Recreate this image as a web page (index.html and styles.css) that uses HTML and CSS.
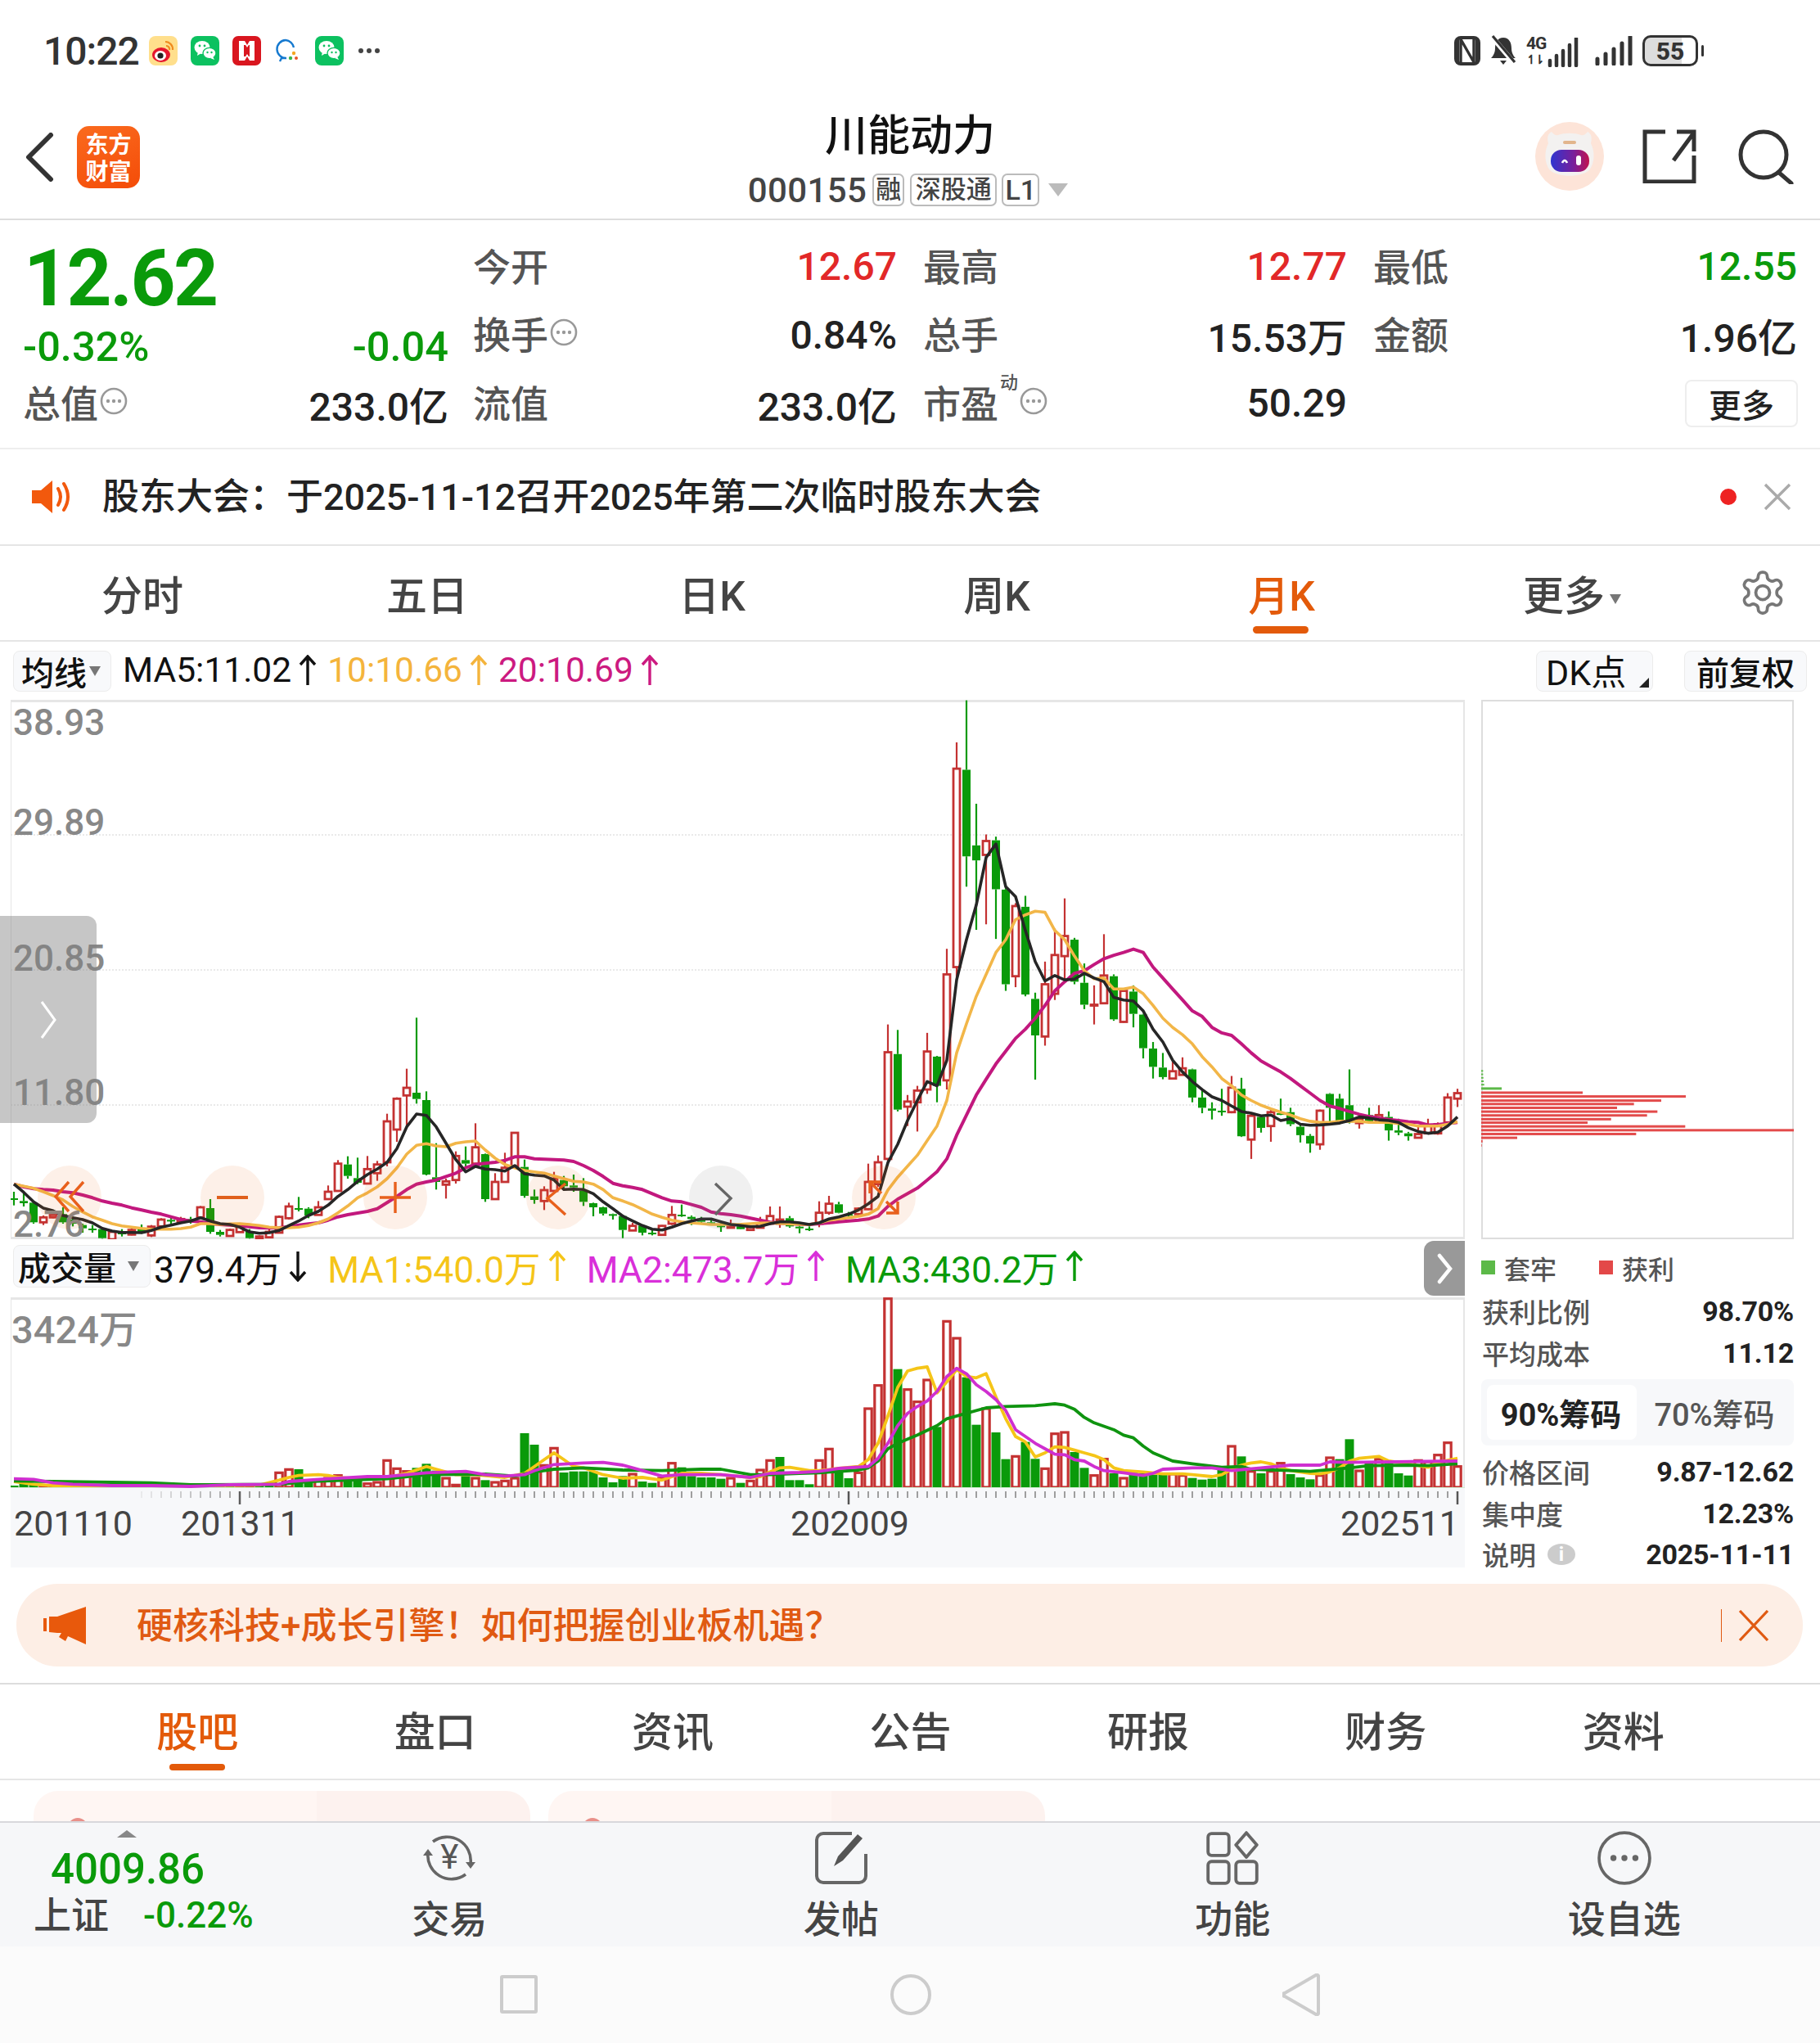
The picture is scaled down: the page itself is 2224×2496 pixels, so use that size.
FILE: index.html
```html
<!DOCTYPE html>
<html lang="zh-CN">
<head>
<meta charset="utf-8">
<title>川能动力 000155</title>
<link rel="stylesheet" href="styles.css">
</head>
<body>
<svg class="defs" width="0" height="0">
  <symbol id="arrow-up" viewBox="0 0 24 38"><path d="M12 37V2M3 12L12 2l9 10" fill="none" stroke="currentColor" stroke-width="3.4"/></symbol>
  <symbol id="arrow-down" viewBox="0 0 24 38"><path d="M12 1v35M3 26l9 10 9-10" fill="none" stroke="currentColor" stroke-width="3.4"/></symbol>
  <symbol id="dots" viewBox="0 0 34 34"><circle cx="17" cy="17" r="15" fill="none" stroke="#999" stroke-width="2.6"/><circle cx="10" cy="17" r="2.2" fill="#999"/><circle cx="17" cy="17" r="2.2" fill="#999"/><circle cx="24" cy="17" r="2.2" fill="#999"/></symbol>
  <symbol id="wechat" viewBox="0 0 35 36"><rect width="35" height="36" rx="8" fill="#0cc160"/><ellipse cx="14" cy="14" rx="9.5" ry="8" fill="#fff"/><path d="M9 19l-1 5 5-3z" fill="#fff"/><ellipse cx="23" cy="21" rx="8" ry="6.6" fill="#fff" stroke="#0cc160" stroke-width="1.4"/><path d="M27 25l2 4-5-2z" fill="#fff"/><circle cx="11" cy="12" r="1.4" fill="#0cc160"/><circle cx="17" cy="12" r="1.4" fill="#0cc160"/><circle cx="20.5" cy="20" r="1.2" fill="#0cc160"/><circle cx="25.500" cy="20" r="1.2" fill="#0cc160"/></symbol>
</svg>

<header class="status">
  <div class="status-left">
    <span class="clock">10:22</span>
    <svg class="app" viewBox="0 0 35 36"><rect width="35" height="36" rx="8" fill="#ffdf8c"/><ellipse cx="15" cy="23" rx="11" ry="9" fill="#e6162d"/><ellipse cx="14" cy="24" rx="7" ry="6" fill="#fff"/><circle cx="14" cy="24" r="3.6" fill="#222"/><path d="M20 7a9 9 0 0 1 9 10M21 12a4 4 0 0 1 4 5" fill="none" stroke="#f08a1d" stroke-width="2.2"/></svg>
    <svg class="app"><use href="#wechat"/></svg>
    <svg class="app" viewBox="0 0 35 36"><rect width="35" height="36" rx="7" fill="#d9161f"/><path d="M8 6h7l3 5 3-5h6v24h-6l-3-5-3 5H8z" fill="#fff"/><path d="M14 11h2l2 3 2-3h1v14h-1l-2-3-2 3h-2z" fill="#d9161f"/></svg>
    <svg class="app app-thin" viewBox="0 0 30 36"><path d="M14 5a11 11 0 1 0 1 22h-6l-2 4" fill="none" stroke="#1579cf" stroke-width="2.4"/><path d="M14 5a11 11 0 0 1 10 9" fill="none" stroke="#1579cf" stroke-width="2.4"/><circle cx="24" cy="21" r="2.2" fill="#f5a623"/><circle cx="20" cy="27" r="2.2" fill="#39b54a"/><circle cx="27" cy="27" r="2" fill="#e8562a"/></svg>
    <svg class="app"><use href="#wechat"/></svg>
    <span class="more-dots"><i></i><i></i><i></i></span>
  </div>
  <div class="status-right">
    <svg class="st-nfc" viewBox="0 0 32 38"><rect x="0" y="1" width="32" height="36" rx="8" fill="#333"/><rect x="6" y="5" width="20" height="28" rx="2" fill="#fff"/><path d="M8 4v30M24 4v30M8 5l16 28" fill="none" stroke="#333" stroke-width="3.400"/></svg>
    <svg class="st-bell" viewBox="0 0 32 38"><path d="M16 3c-7 0-10 6-10 13 0 6-3 10-5 12h30c-2-2-5-6-5-12 0-7-3-13-10-13z" fill="#333"/><path d="M12 31h8l-4 5z" fill="#333"/><path d="M3 3l27 32" stroke="#fff" stroke-width="6"/><path d="M3 1l27 32" stroke="#333" stroke-width="3.2"/></svg>
    <span class="st-net">
      <span class="st-4g">4G<em>↿⇂</em></span>
      <svg class="st-bars" viewBox="0 0 38 36"><path d="M3 28v6M11 22v12M19 16v18M27 9v25M35 1v33" stroke="#333" stroke-width="4.5" stroke-linecap="round"/></svg>
    </span>
    <svg class="st-bars st-bars-2" viewBox="0 0 46 36"><path d="M3 28v6M13 22v12M23 16v18M33 9v25M43 1v33" stroke="#333" stroke-width="5" stroke-linecap="round"/></svg>
    <span class="battery"><b>55</b></span>
  </div>
</header>

<section class="topbar">
  <div class="topbar-left">
    <svg class="back" viewBox="0 0 36 60"><path d="M32 3L5 30l27 27" fill="none" stroke="#333" stroke-width="6" stroke-linecap="round" stroke-linejoin="round"/></svg>
    <div class="logo">东方<br>财富</div>
  </div>
  <div class="topbar-center">
    <h1>川能动力</h1>
    <div class="code-row">
      <span class="code">000155</span>
      <span class="tag">融</span><span class="tag tag-wide">深股通</span><span class="tag tag-l1">L1</span>
      <span class="tri-down"></span>
    </div>
  </div>
  <div class="topbar-right">
    <svg class="robot" viewBox="0 0 84 84"><defs><linearGradient id="visor" x1="0" x2="1"><stop offset="0" stop-color="#2f35d0"/><stop offset=".6" stop-color="#7a1f9a"/><stop offset="1" stop-color="#c0134e"/></linearGradient></defs><circle cx="42" cy="42" r="42" fill="#fde4d8"/><path d="M16 26c-2-8 0-12 4-14 3 4 6 5 8 4 8-3 20-3 28 0 2 1 5 0 8-4 4 2 6 6 4 14 5 10 5 24-2 33-10 9-38 9-48 0-7-9-7-23-2-33z" fill="#f3f1f0"/><rect x="19" y="34" width="47" height="27" rx="13" fill="url(#visor)"/><path d="M33 50q3-6 6 0" fill="none" stroke="#fff" stroke-width="2.6"/><rect x="50" y="41" width="6" height="12" rx="3" fill="#fff"/><rect x="34" y="23" width="16" height="4" rx="2" fill="#e2b58c"/></svg>
    <svg class="share" viewBox="0 0 66 66"><path d="M28 3H3v61h60V32M38 38L63 4M42 3h21v24" fill="none" stroke="#333" stroke-width="5"/></svg>
    <svg class="search" viewBox="0 0 68 68"><circle cx="31" cy="32" r="28" fill="none" stroke="#333" stroke-width="5"/><path d="M50 54l15 13" stroke="#333" stroke-width="5" stroke-linecap="round"/></svg>
  </div>
</section>

<section class="quote">
  <div class="q-main">
    <div class="q-price">12.62</div>
    <div class="q-change"><span>-0.32%</span><span>-0.04</span></div>
  </div>
  <div class="q-cell"><span class="lb">今开</span><span class="val up">12.67</span></div>
  <div class="q-cell"><span class="lb">最高</span><span class="val up">12.77</span></div>
  <div class="q-cell"><span class="lb">最低</span><span class="val down">12.55</span></div>
  <div class="q-cell"><span class="lb">换手<svg class="q-dots"><use href="#dots"/></svg></span><span class="val">0.84%</span></div>
  <div class="q-cell"><span class="lb">总手</span><span class="val">15.53万</span></div>
  <div class="q-cell"><span class="lb">金额</span><span class="val">1.96亿</span></div>
  <div class="q-cell q-first"><span class="lb">总值<svg class="q-dots"><use href="#dots"/></svg></span><span class="val">233.0亿</span></div>
  <div class="q-cell"><span class="lb">流值</span><span class="val">233.0亿</span></div>
  <div class="q-cell"><span class="lb">市盈<sup>动</sup><svg class="q-dots"><use href="#dots"/></svg></span><span class="val">50.29</span></div>
  <div class="q-cell q-more"><button class="btn-more">更多</button></div>
</section>

<section class="notice">
  <svg class="notice-icon" viewBox="0 0 50 44"><path d="M1 14h11L26 2v40L12 30H1z" fill="#f2590d"/><path d="M33 12q6 10 0 20M40 6q10 16 0 32" fill="none" stroke="#f2590d" stroke-width="4" stroke-linecap="round"/></svg>
  <span class="notice-text">股东大会：于2025-11-12召开2025年第二次临时股东大会</span>
  <i class="notice-dot"></i>
  <svg class="notice-x" viewBox="0 0 36 36"><path d="M3 3l30 30M33 3L3 33" stroke="#aaa" stroke-width="3.400"/></svg>
</section>

<nav class="period">
  <span class="p-tab">分时</span>
  <span class="p-tab">五日</span>
  <span class="p-tab">日K</span>
  <span class="p-tab">周K</span>
  <span class="p-tab is-on">月K</span>
  <span class="p-tab p-more">更多<i class="tri-small"></i></span>
  <span class="p-gear">
    <svg viewBox="0 0 24 24"><path d="M12.22 2h-.44a2 2 0 0 0-2 2v.18a2 2 0 0 1-1 1.73l-.43.25a2 2 0 0 1-2 0l-.15-.08a2 2 0 0 0-2.73.73l-.22.38a2 2 0 0 0 .73 2.73l.15.1a2 2 0 0 1 1 1.72v.51a2 2 0 0 1-1 1.74l-.15.09a2 2 0 0 0-.73 2.73l.22.38a2 2 0 0 0 2.73.73l.15-.08a2 2 0 0 1 2 0l.43.25a2 2 0 0 1 1 1.73V20a2 2 0 0 0 2 2h.44a2 2 0 0 0 2-2v-.18a2 2 0 0 1 1-1.73l.43-.25a2 2 0 0 1 2 0l.15.08a2 2 0 0 0 2.73-.73l.22-.39a2 2 0 0 0-.73-2.73l-.15-.08a2 2 0 0 1-1-1.74v-.5a2 2 0 0 1 1-1.74l.15-.09a2 2 0 0 0 .73-2.73l-.22-.38a2 2 0 0 0-2.73-.73l-.15.08a2 2 0 0 1-2 0l-.43-.25a2 2 0 0 1-1-1.73V4a2 2 0 0 0-2-2z" fill="none" stroke="#777" stroke-width="1.5"/><circle cx="12" cy="12" r="3.4" fill="none" stroke="#777" stroke-width="1.5"/></svg>
  </span>
</nav>

<section class="ma-row">
  <span class="pill pill-ma">均线<i class="tri-small"></i></span>
  <span class="ma ma-black">MA5:11.02<svg class="arr"><use href="#arrow-up"/></svg></span>
  <span class="ma ma-orange">10:10.66<svg class="arr"><use href="#arrow-up"/></svg></span>
  <span class="ma ma-pink">20:10.69<svg class="arr"><use href="#arrow-up"/></svg></span>
  <span class="ma-spacer"></span>
  <span class="pill pill-dk">DK点<i class="corner"></i></span>
  <span class="pill pill-fq">前复权</span>
</section>

<main class="board">
  <div class="board-left">
    <div class="kchart">
      <svg id="kline" class="chart-svg" viewBox="13 855 1777 659"></svg>
      <span class="ax ax-1">38.93</span>
      <span class="ax ax-2">29.89</span>
      <span class="ax ax-3">20.85</span>
      <span class="ax ax-4">11.80</span>
      <span class="ax ax-5">2.76</span>
      <div class="handle"><svg viewBox="0 0 20 46"><path d="M2 1l16 22L2 45" fill="none" stroke="#fff" stroke-width="3"/></svg></div>
      <div class="fabs">
        <span class="fab"><svg viewBox="0 0 78 78"><path d="M38 20L22 38l16 18M56 20L40 38l16 18" fill="none" stroke="#e8601c" stroke-width="3.400"/></svg></span>
        <span class="fab"><svg viewBox="0 0 78 78"><path d="M20 39h38" stroke="#e0601c" stroke-width="4"/></svg></span>
        <span class="fab"><svg viewBox="0 0 78 78"><path d="M20 39h38M39 20v38" stroke="#e8601c" stroke-width="3.400"/></svg></span>
        <span class="fab"><svg viewBox="0 0 78 78"><path d="M48 22L26 40l22 20" fill="none" stroke="#e8601c" stroke-width="3.400"/></svg></span>
        <span class="fab fab-grey"><svg viewBox="0 0 78 78"><path d="M32 22l19 18-19 20" fill="none" stroke="#666" stroke-width="3.400"/></svg></span>
        <span class="fab"><svg viewBox="0 0 78 78"><path d="M22 34V20h14M22 20l14 14M56 44v14H42M56 58L42 44" fill="none" stroke="#e8601c" stroke-width="3.400"/></svg></span>
      </div>
    </div>
    <div class="vol-head">
      <span class="pill pill-vol">成交量<i class="tri-small"></i></span>
      <span class="ma ma-black">379.4万<svg class="arr"><use href="#arrow-down"/></svg></span>
      <span class="ma ma-yellow">MA1:540.0万<svg class="arr"><use href="#arrow-up"/></svg></span>
      <span class="ma ma-magenta">MA2:473.7万<svg class="arr"><use href="#arrow-up"/></svg></span>
      <span class="ma ma-green">MA3:430.2万<svg class="arr"><use href="#arrow-up"/></svg></span>
      <span class="vol-next"><svg viewBox="0 0 20 38"><path d="M4 3l13 16L4 35" fill="none" stroke="#fff" stroke-width="4.500" stroke-linecap="round"/></svg></span>
    </div>
    <div class="volchart">
      <svg id="volume" class="chart-svg" viewBox="13 1585 1777 233"></svg>
      <span class="ax ax-vol">3424万</span>
    </div>
    <div class="timeline">
      <svg id="ticks" class="chart-svg" viewBox="13 1818 1777 97"></svg>
      <span class="tl tl-1">201110</span>
      <span class="tl tl-2">201311</span>
      <span class="tl tl-3">202009</span>
      <span class="tl tl-4">202511</span>
    </div>
  </div>

  <aside class="chips">
    <div class="chip-chart"><svg id="chipbars" class="chart-svg" viewBox="0 0 382 659"></svg></div>
    <div class="chip-legend">
      <span class="lg"><i class="sq sq-g"></i>套牢</span>
      <span class="lg"><i class="sq sq-r"></i>获利</span>
    </div>
    <div class="chip-row"><span>获利比例</span><b>98.70%</b></div>
    <div class="chip-row"><span>平均成本</span><b>11.12</b></div>
    <div class="chip-tabs"><span class="ct ct-on">90%筹码</span><span class="ct">70%筹码</span></div>
    <div class="chip-row"><span>价格区间</span><b>9.87-12.62</b></div>
    <div class="chip-row"><span>集中度</span><b>12.23%</b></div>
    <div class="chip-row"><span>说明<i class="info">i</i></span><b>2025-11-11</b></div>
  </aside>
</main>

<section class="promo">
  <svg class="promo-icon" viewBox="0 0 52 46"><path d="M0 14h4v16H0zM7 12h10L52 0v46L30 36l-3 6-8-5 3-5h-5l-10-1z" fill="#e8590c"/></svg>
  <span class="promo-text">硬核科技+成长引擎！如何把握创业板机遇？</span>
  <i class="promo-sep"></i>
  <svg class="promo-x" viewBox="0 0 38 38"><path d="M2 1l34 36M36 1L2 37" stroke="#e05a12" stroke-width="3.200"/></svg>
</section>

<nav class="tabs">
  <span class="tab is-on">股吧</span>
  <span class="tab">盘口</span>
  <span class="tab">资讯</span>
  <span class="tab">公告</span>
  <span class="tab">研报</span>
  <span class="tab">财务</span>
  <span class="tab">资料</span>
</nav>

<section class="peek">
  <div class="peek-card"><i></i></div>
  <div class="peek-card"><i></i></div>
</section>

<footer class="dock">
  <div class="index">
    <i class="index-tri"></i>
    <div class="index-val">4009.86</div>
    <div class="index-sub"><span>上证</span><b>-0.22%</b></div>
  </div>
  <div class="dock-item">
    <span class="trade-icon"><svg viewBox="0 0 72 66"><path d="M16 13A29 29 0 0 1 62 40M56 53A29 29 0 0 1 10 26" fill="none" stroke="#666" stroke-width="3.600"/><path d="M4 30l6-8 6 8M56 38l6 8 6-8" fill="#666"/></svg><em>¥</em></span>
    <span class="dock-label">交易</span>
  </div>
  <div class="dock-item">
    <svg class="dock-icon" viewBox="0 0 66 66"><path d="M46 3H11a8 8 0 0 0-8 8v44a8 8 0 0 0 8 8h44a8 8 0 0 0 8-8V28" fill="none" stroke="#666" stroke-width="4"/><path d="M24 43l5-12L53 4l6 5-24 27z" fill="#555"/></svg>
    <span class="dock-label">发帖</span>
  </div>
  <div class="dock-item">
    <svg class="dock-icon" viewBox="0 0 60 62"><rect x="2" y="3" width="24" height="25" rx="4" fill="none" stroke="#666" stroke-width="3.600"/><rect x="2" y="35" width="24" height="25" rx="4" fill="none" stroke="#666" stroke-width="3.600"/><rect x="34" y="35" width="24" height="25" rx="4" fill="none" stroke="#666" stroke-width="3.600"/><path d="M46 2l12 14-12 14-12-14z" fill="none" stroke="#666" stroke-width="3.600" stroke-linejoin="round"/></svg>
    <span class="dock-label">功能</span>
  </div>
  <div class="dock-item">
    <svg class="dock-icon" viewBox="0 0 64 64"><circle cx="32" cy="32" r="30" fill="none" stroke="#666" stroke-width="3.600"/><circle cx="19" cy="32" r="3.600" fill="#666"/><circle cx="32" cy="32" r="3.600" fill="#666"/><circle cx="45" cy="32" r="3.600" fill="#666"/></svg>
    <span class="dock-label">设自选</span>
  </div>
</footer>

<div class="navbar">
  <i class="nav-square"></i>
  <i class="nav-circle"></i>
  <svg class="nav-back" viewBox="0 0 46 52"><path d="M44 3v46a2 2 0 0 1-3 1L3 28a2 2 0 0 1 0-4L41 2a2 2 0 0 1 3 1z" fill="none" stroke="#ccc" stroke-width="4"/></svg>
</div>

<script src="chart.js"></script>
</body>
</html>
```
FILE: styles.css
```css
* { box-sizing: border-box; }
html, body { margin: 0; padding: 0; }
body {
  width: 2224px;
  height: 2496px;
  overflow: hidden;
  background: #fff;
  color: #222;
  font-family: Roboto, "Noto Sans CJK SC", sans-serif;
}
i, em { font-style: normal; }
.defs { position: absolute; }

/* status bar */
.status { height: 120px; display: flex; justify-content: space-between; align-items: center; padding: 4px 0 0 53px; }
.status-left { display: flex; align-items: center; }
.clock { font-size: 48px; font-weight: 500; color: #333; width: 129px; letter-spacing: -1px; }
.app { width: 35px; height: 36px; margin-right: 16px; }
.app-thin { width: 30px; margin-right: 20px; }
.more-dots { display: flex; gap: 4px; margin-left: 2px; }
.more-dots i { width: 6px; height: 6px; border-radius: 50%; background: #444; }
.status-right { display: flex; align-items: center; width: 447px; height: 40px; }
.st-nfc { width: 32px; height: 38px; margin-right: 12px; }
.st-bell { width: 32px; height: 38px; margin-right: 12px; }
.st-net { display: flex; align-items: flex-end; width: 64px; height: 40px; margin-right: 20px; }
.st-4g { display: flex; flex-direction: column; width: 26px; font-size: 21px; line-height: 22px; font-weight: 700; color: #333; letter-spacing: -1px; }
.st-4g em { font-size: 15px; line-height: 18px; letter-spacing: -3px; }
.st-bars { width: 38px; height: 36px; }
.st-bars-2 { width: 46px; margin-right: 12px; }
.battery { position: relative; display: flex; align-items: center; justify-content: center; width: 68px; height: 38px; border: 3px solid #333; border-radius: 10px; background: linear-gradient(90deg, #ddd 72%, #fff 72%); }
.battery b { font-size: 30px; font-weight: 800; color: #333; }
.battery::after { content: ""; position: absolute; right: -10px; top: 9px; width: 3px; height: 14px; background: #333; border-radius: 2px; }

/* top bar */
.topbar { position: relative; height: 149px; border-bottom: 2px solid #ddd; display: flex; justify-content: space-between; }
.topbar-left { display: flex; align-items: center; gap: 28px; padding: 0 0 4px 30px; }
.back { width: 36px; height: 60px; }
.logo { width: 77px; height: 76px; border-radius: 15px; background: linear-gradient(160deg, #fa6a1e, #f44c08); color: #fff; font-size: 28px; line-height: 33px; font-weight: 700; text-align: center; padding-top: 5px; font-family: "Noto Sans CJK SC", sans-serif; }
.topbar-center { position: absolute; left: 0; right: 0; top: 12px; display: flex; flex-direction: column; align-items: center; }
.topbar-center h1 { margin: 0; font-size: 52px; line-height: 70px; font-weight: 500; color: #111; }
.code-row { display: flex; align-items: center; height: 40px; margin-top: 10px; gap: 7px; margin-left: -5px; }
.code { font-size: 42px; color: #444; letter-spacing: .4px; font-weight: 500; }
.tag { height: 40px; width: 39px; border: 2px solid #bbb; border-radius: 7px; font-size: 31px; line-height: 36px; text-align: center; color: #444; font-weight: 500; }
.tag-wide { width: 106px; margin-left: 0; }
.tag-l1 { width: 46px; margin-left: -1px; font-size: 34px; }
.tri-down { width: 0; height: 0; border-left: 12px solid transparent; border-right: 12px solid transparent; border-top: 16px solid #bbb; margin-left: 4px; }
.topbar-right { display: flex; align-items: center; padding: 0 32px 6px 0; }
.robot { width: 84px; height: 84px; margin-right: 47px; }
.share { width: 66px; height: 66px; margin-right: 51px; }
.search { width: 68px; height: 68px; }

/* quote */
.quote { height: 280px; padding: 15px 28px 0 28px; display: grid; grid-template-columns: repeat(4, 1fr); grid-template-rows: repeat(3, 83.5px); column-gap: 32px; border-bottom: 2px solid #eee; }
.q-main { grid-row: 1 / span 2; display: flex; flex-direction: column; margin-right: -2px; }
.q-price { font-size: 96px; line-height: 112px; font-weight: 700; color: #0a9a0a; letter-spacing: -2.5px; padding-left: 1px; }
.q-change { display: flex; justify-content: space-between; font-size: 50.500px; line-height: 50px; margin-top: 3px; font-weight: 500; color: #0a9a0a; }
.q-first { margin-right: -2px; }
.q-cell { display: flex; align-items: center; justify-content: space-between; }
.lb { display: flex; align-items: center; font-size: 46px; font-weight: 500; color: #555; padding-bottom: 6px; }
.lb sup { font-size: 22px; line-height: 22px; align-self: flex-start; margin: 0 0 0 2px; }
.val { font-size: 48px; font-weight: 500; color: #222; }
.up { color: #e22828; }
.down { color: #0a9a0a; }
.q-dots { width: 34px; height: 34px; margin-left: 2px; }
.btn-more { margin-left: auto; width: 138px; height: 58px; margin-right: -1px; border: 2px solid #eee; border-radius: 8px; background: #fff; color: #222; font: 500 40px/1 "Noto Sans CJK SC", sans-serif; padding: 0; }

/* notice */
.notice { height: 118px; display: flex; align-items: center; padding: 0 34px 0 38px; border-bottom: 2px solid #e5e5e5; }
.notice-icon { width: 50px; height: 44px; margin-right: 37px; }
.notice-text { flex: 1; font-size: 45px; font-weight: 500; color: #222; padding-bottom: 7px; }
.notice-dot { width: 20px; height: 20px; border-radius: 50%; background: #ee2222; margin-right: 32px; }
.notice-x { width: 36px; height: 36px; }

/* period tabs */
.period { height: 117px; display: grid; grid-template-columns: repeat(6, 348px) 1fr; align-items: center; border-bottom: 2px solid #e5e5e5; padding-bottom: 2px; }
.p-tab { position: relative; text-align: center; font-size: 50px; font-weight: 500; color: #444; }
.p-tab.is-on { color: #e35a0a; }
.p-tab.is-on::after { content: ""; position: absolute; left: 139px; top: 77px; width: 68px; height: 9px; border-radius: 5px; background: #e35a0a; }
.p-more { padding-left: 14px; }
.tri-small { display: inline-block; width: 0; height: 0; border-left: 7px solid transparent; border-right: 7px solid transparent; border-top: 12px solid #777; margin-left: 6px; vertical-align: 8px; }
.p-gear { width: 60px; height: 60px; margin-left: 36px; }
.p-gear svg { width: 60px; height: 60px; display: block; }

/* MA row */
.ma-row { height: 71px; display: flex; align-items: center; padding: 0 16px; gap: 12px; }
.pill { display: flex; align-items: center; height: 50px; border: 1.5px solid #ececec; border-radius: 8px; background: #f8f9fb; font-size: 40px; font-weight: 500; color: #111; font-family: "Noto Sans CJK SC", Roboto, sans-serif; }
.pill-ma { width: 120px; margin-right: 2px; padding-left: 9px; }
.pill-ma .tri-small { margin-left: 3px; }
.pill-dk { position: relative; width: 143px; margin-right: 26px; font-family: Roboto, "Noto Sans CJK SC", sans-serif; padding-left: 11px; font-size: 43px; font-weight: 400; padding-bottom: 3px; }
.pill-fq { width: 150px; justify-content: center; }
.corner { position: absolute; right: 4px; bottom: 4px; width: 0; height: 0; border-left: 12px solid transparent; border-bottom: 12px solid #222; }
.ma-spacer { flex: 1; }
.ma { display: inline-flex; align-items: center; gap: 8px; font-size: 42.500px; white-space: nowrap; }
.ma-row .ma { padding-bottom: 2px; }
.arr { width: 24px; height: 38px; }
.ma-black { color: #111; }
.ma-orange { color: #f4b43c; }
.ma-pink { color: #cc1a80; }
.ma-yellow { color: #f5c518; }
.ma-magenta { color: #d92fd9; }
.ma-green { color: #0a9a0a; }

/* board */
.board { display: grid; grid-template-columns: 1777px 382px; column-gap: 20px; margin-left: 13px; height: 1060px; }
.board-left { display: flex; flex-direction: column; }
.kchart { position: relative; height: 659px; border: solid #e6e6e6; border-width: 3px 2px 3px 1px; }
.chart-svg { position: absolute; left: -1px; top: -3px; width: 1777px; height: 100%; display: block; }
.kchart .chart-svg { height: 659px; }
.ax { position: absolute; left: 2px; font-size: 44px; line-height: 44px; color: #888; font-weight: 500; }
.ax-1 { top: 3px; }
.ax-2 { top: 125px; }
.ax-3 { top: 291px; }
.ax-4 { top: 455px; }
.ax-5 { top: 616px; }
.handle { position: absolute; left: -14px; top: 261px; width: 118px; height: 253px; border-radius: 0 12px 12px 0; background: rgba(128, 128, 128, .45); display: flex; align-items: center; justify-content: center; }
.handle svg { width: 20px; height: 46px; }
.fabs { position: absolute; left: 32px; top: 566px; display: flex; gap: 121px; }
.fab { width: 78px; height: 78px; border-radius: 50%; background: rgba(240, 110, 30, .1); }
.fab svg { width: 78px; height: 78px; display: block; }
.fab-grey { background: rgba(130, 130, 130, .12); }

.vol-head { position: relative; height: 71px; display: flex; align-items: center; gap: 24px; padding: 0 0 5px 3px; }
.vol-head .ma { font-size: 44.500px; }
.pill-vol { width: 168px; margin-right: -20px; height: 52px; padding-left: 5px; }
.pill-vol .tri-small { margin-left: 14px; }
.vol-next { position: absolute; right: 0; top: 2px; width: 50px; height: 67px; border-radius: 12px 0 0 12px; background: #999; display: flex; align-items: center; justify-content: center; }
.vol-next svg { width: 20px; height: 38px; }
.volchart { position: relative; height: 233px; border-left: 1px solid #e6e6e6; border-right: 2px solid #e6e6e6; border-top: 3px solid #e6e6e6; }
#volume { top: -3px; left: -1px; height: 233px; }
.ax-vol { top: 15px; left: 0; font-size: 47px; }
.timeline { position: relative; height: 97px; background: #f7f8fa; }
#ticks { left: 0; top: 0; height: 97px; }
.tl { position: absolute; top: 19px; font-size: 43px; line-height: 48px; color: #444; }
.tl-1 { left: 4px; }
.tl-2 { left: 208px; }
.tl-3 { left: 953px; }
.tl-4 { left: 1625px; }

/* chips */
.chips { display: flex; flex-direction: column; height: 1060px; overflow: hidden; }
.chip-chart { position: relative; height: 659px; flex: none; border: 2px solid #ddd; }
#chipbars { left: -2px; top: -2px; width: 382px; height: 659px; }
.chip-legend { height: 63px; flex: none; display: flex; align-items: center; gap: 52px; font-size: 32px; font-weight: 500; color: #555; padding-top: 6px; }
.lg { display: flex; align-items: center; font-family: "Noto Sans CJK SC", sans-serif; }
.sq { width: 17px; height: 17px; margin-right: 11px; }
.sq-g { background: #5cb948; }
.sq-r { background: #e34848; }
.chip-row { flex: none; height: 50.500px; display: flex; align-items: center; justify-content: space-between; font-size: 33px; color: #555; padding: 0 0 0 1px; }
.chip-row b { font-weight: 700; color: #222; font-size: 34px; letter-spacing: -.2px; }
.chip-row span { display: flex; align-items: center; font-weight: 500; font-family: "Noto Sans CJK SC", sans-serif; }
.info { width: 34px; height: 26px; margin-left: 14px; border-radius: 50%; background: #ccc; color: #fff; font: 700 24px/26px Roboto, sans-serif; text-align: center; }
.chip-tabs { flex: none; height: 81px; margin: 7px 0; border-radius: 8px; background: #f7f8fa; display: flex; padding: 7px; align-items: stretch; }
.ct { flex: 1; display: flex; align-items: center; justify-content: center; font-size: 38px; color: #555; font-weight: 500; padding-left: 5px; }
.ct-on { background: #fff; border-radius: 8px; color: #222; font-weight: 700; flex: none; width: 183px; padding: 0 2px 0 0; }

/* promo */
.promo { height: 101px; margin: 20px 21px 20px 20px; border-radius: 50px; background: #fdeee5; display: flex; align-items: center; padding: 0 41px 0 33px; }
.promo-icon { width: 52px; height: 46px; margin-right: 62px; }
.promo-text { flex: 1; font-size: 44px; font-weight: 500; color: #e05a12; padding-bottom: 5px; }
.promo-sep { width: 1px; height: 40px; background: #e05a12; margin-right: 20px; }
.promo-x { width: 38px; height: 38px; }

/* tabs */
.tabs { height: 119px; padding: 0 95px 7px 96px; display: grid; grid-template-columns: repeat(7, 1fr); align-items: center; border-top: 2px solid #ddd; border-bottom: 2px solid #e6e6e6; }
.tab { position: relative; text-align: center; font-size: 50px; font-weight: 500; color: #444; }
.tab.is-on { color: #e35a0a; }
.tab.is-on::after { content: ""; position: absolute; left: 111px; top: 79px; width: 68px; height: 8px; border-radius: 4px; background: #e35a0a; }

.peek { height: 50px; overflow: hidden; display: flex; gap: 22px; padding: 13px 0 0 41px; }
.peek-card { position: relative; width: 607px; height: 90px; border-radius: 30px; background: linear-gradient(90deg, #fff6f3 57%, #fdf2ef 57%); }
.peek-card i { position: absolute; left: 42px; top: 33px; width: 24px; height: 24px; border-radius: 50%; background: #e9908a; }

/* dock */
.dock { height: 153px; background: #f6f7f9; border-top: 2px solid #d8d8dc; display: grid; grid-template-columns: 310px repeat(4, 478.5px); }
.index { position: relative; padding: 30px 0 0 41px; }
.index-tri { position: absolute; left: 143px; top: 9px; width: 0; height: 0; border-left: 12px solid transparent; border-right: 12px solid transparent; border-bottom: 9px solid #888; }
.index-val { font-size: 51px; line-height: 54px; font-weight: 500; color: #0a9a0a; padding-left: 21px; }
.index-sub { display: flex; align-items: center; gap: 42px; margin-top: 1px; font-size: 46px; font-weight: 500; color: #444; line-height: 56px; }
.index-sub b { font-size: 44px; font-weight: 500; color: #0a9a0a; }
.dock-item { display: flex; flex-direction: column; align-items: center; padding-top: 10px; }
.dock-icon { width: 66px; height: 66px; flex: none; }
.trade-icon { position: relative; width: 72px; height: 66px; flex: none; display: block; }
.trade-icon svg { width: 72px; height: 66px; display: block; }
.trade-icon em { position: absolute; left: 0; right: 0; top: 8px; text-align: center; font-size: 42px; line-height: 48px; color: #555; }
.dock-label { font-size: 46px; font-weight: 500; line-height: 60px; color: #444; margin-top: 12px; }

/* nav */
.navbar { height: 118px; background: #fbfbfb; display: flex; align-items: center; padding: 0 0 1px 611px; }
.nav-square { width: 46px; height: 47px; border: 4px solid #ccc; border-radius: 3px; }
.nav-circle { width: 50px; height: 50px; border: 4px solid #ccc; border-radius: 50%; margin-left: 431px; }
.nav-back { width: 46px; height: 52px; margin-left: 429px; }
```
FILE: chart.js
```js
(function () {
  var NS = 'http://www.w3.org/2000/svg';
  var RED = '#c43232', GREEN = '#0a9a0a';
  function el(parent, tag, attrs) {
    var n = document.createElementNS(NS, tag);
    for (var k in attrs) n.setAttribute(k, attrs[k]);
    parent.appendChild(n);
    return n;
  }
  function cx(i) { return 17 + 12 * i; }
  function yA(z) { return 1220 + z / 3; }
  function yB(z) { return 840 + z / 2.24; }

  // colour + high, body top, body bottom, low
  var head = 'g708,732,738,758 g712,742,750,762 g745,748,820,825 r795,802,820,830 r775,793,802,805 g765,790,820,825 g800,810,825,835 g825,830,842,858 g830,843,847,858 g843,845,878,880 r850,855,882,884 g845,858,862,872 r843,848,865,868 g828,845,860,862 r830,836,868,874 r805,810,835,838 g800,811,815,825 r800,808,818,825 g800,808,818,825 r760,765,802,806 g735,768,855,862 g848,855,866,872 r843,848,870,872 r828,832,856,858 g845,855,878,880 r868,872,880,882 r845,855,875,878 r795,800,858,860 r748,762,805,810 g727,768,772,780 g765,770,795,805 r742,765,793,795 r685,708,735,738 r592,605,705,708 g578,608,650,660 g583,658,675,680 r577,625,678,680 r595,608,640,668 r422,450,600,615 r362,367,480,525 r257,327,355,465 g70,345,368,385 g340,372,645,648 g530,655,672,700 r660,670,682,733 r560,577,665,678 g542,592,605,620 r457,545,605,612 g568,570,735,745 r640,672,735,738 r565,620,672,675 r490,492,615,620 g590,617,723,730 g700,725,738,752 r688,702,742,775 r635,660,705,708 g650,665,688,695 g645,685,692,708 g658,705,745,760 g748,750,765,798 g763,765,788,795 g788,790,795,810 g795,797,848,878 r822,833,850,852 g830,832,858,868 g845,858,862,868 r830,833,866,868 r760,793,825,830 g755,792,796,800 g795,800,808,830 g800,808,818,822 g812,820,824,828 g820,832,836,855 r810,832,840,842 g830,835,845,846 r830,838,848,852 r800,825,840,842 r762,797,825,830 r762,810,825,840 g797,805,835,840 g830,836,842,860 g835,843,848,852 r743,785,825,838 r723,752,785,792 g745,754,785,787 g782,790,795,800 r765,770,790,795 r605,672,772,775 r575,600,680,690';
  var tail = 'r922,998,1290,1300 g937,1003,1155,1160 r1115,1133,1147,1200 r1090,1103,1135,1215 r945,996,1100,1112 g1008,1010,1090,1135 r715,785,1075,1100 r150,222,765,800 g35,225,462,545 g318,432,473,663 r402,420,458,648 g408,418,552,688 g545,553,812,830 r590,598,790,820 g570,600,840,845 g835,852,952,1073 r750,812,955,980 r660,732,838,855 r577,680,735,800 g685,690,805,812 g755,808,868,880 r815,868,870,922 r675,788,864,866 g785,790,908,912 r825,830,915,917 g815,832,893,930 g893,895,987,1015 g970,988,1038,1070 g1000,1040,1066,1072 r1020,1050,1070,1073 r1012,1042,1060,1060 g1043,1045,1122,1135 g1100,1122,1150,1165 g1135,1152,1158,1182 g1098,1158,1160,1172 r1063,1095,1162,1165 g1068,1098,1228,1230 r1165,1172,1237,1290 g1170,1175,1205,1218 r1155,1162,1200,1243 g1125,1165,1168,1170 g1150,1162,1195,1200 g1195,1202,1225,1245 g1222,1227,1248,1273 r1155,1158,1250,1265 g1110,1112,1150,1190 g1112,1125,1185,1195 g1045,1143,1190,1193 r1175,1180,1192,1207 g1150,1170,1190,1192 r1143,1170,1190,1192 g1160,1175,1212,1240 g1180,1212,1218,1225 g1216,1220,1228,1240 r1200,1222,1232,1233 r1180,1197,1220,1222 r1190,1195,1220,1224 r1110,1122,1190,1195 r1098,1110,1125,1148';

  function parse(s, map) {
    return s.split(' ').map(function (t) {
      var v = t.slice(1).split(',').map(Number).map(map);
      return { up: t[0] === 'r', h: v[0], t: v[1], b: v[2], l: v[3] };
    });
  }
  var candles = parse(head, yA).concat(parse(tail, yB));

  function series(a, b) { return a.map(yA).concat(b.map(yB)); }
  var ma5 = series([680,710,745,768,778,795,803,810,822,842,852,857,857,858,850,838,830,822,815,803,815,825,828,838,855,860,858,850,832,815,795,780,757,725,700,670,645,625,600,550,470,423,428,470,530,590,635,615,625,627,632,612,642,647,650,665,700,698,700,715,745,770,797,815,832,845,848,838,825,815,808,808,818,828,832,836,835,825,818,818,822,828,822,808,800,790,775,752,725],
    [1300,1250,1185,1130,1078,1090,1020,800,690,595,465,428,545,572,665,750,803,788,800,798,782,795,805,848,855,858,885,935,970,1020,1052,1078,1100,1120,1130,1145,1160,1165,1172,1170,1185,1180,1195,1198,1197,1195,1192,1185,1175,1178,1183,1185,1190,1205,1215,1220,1217,1200,1175]);
  var ma10 = series([680,688,695,708,722,738,762,782,800,812,825,833,838,842,845,845,845,843,838,825,825,828,826,825,828,832,838,840,840,838,832,822,808,785,760,730,712,690,660,620,570,538,532,540,543,530,525,522,555,585,608,620,630,635,640,650,660,670,672,680,700,730,742,755,772,790,802,812,818,822,825,828,828,828,827,825,823,822,824,826,827,828,822,812,808,803,798,790,770],
    [1375,1340,1310,1280,1240,1200,1130,1000,920,845,785,725,690,635,622,612,615,665,690,735,775,797,795,825,825,820,838,870,905,930,950,975,1010,1038,1070,1090,1115,1130,1143,1153,1162,1170,1180,1187,1190,1190,1187,1187,1187,1190,1190,1190,1193,1195,1200,1200,1200,1195,1188]);
  var ma20 = series([680,690,697,700,702,708,712,720,730,742,750,757,767,775,783,790,800,810,815,818,825,828,830,832,836,840,841,840,836,830,826,822,812,800,792,786,780,770,748,725,700,680,672,665,652,640,620,608,604,600,593,580,580,587,589,590,592,597,612,630,652,677,686,692,700,715,730,742,745,755,765,782,788,792,797,805,812,820,823,825,827,828,825,822,818,815,812,808,797],
    [1420,1400,1385,1370,1348,1325,1290,1225,1170,1115,1072,1030,995,960,935,905,870,830,805,782,775,758,742,733,725,716,725,765,795,825,855,885,900,930,945,952,975,1000,1022,1037,1052,1070,1090,1110,1130,1145,1152,1160,1168,1174,1178,1182,1185,1188,1190,1197,1196,1193,1190]);

  function line(svg, ys, color, w) {
    var pts = ys.map(function (y, i) { return cx(i) + ',' + y.toFixed(1); }).join(' ');
    el(svg, 'polyline', { points: pts, fill: 'none', stroke: color, 'stroke-width': w, 'stroke-linejoin': 'round' });
  }

  // price chart
  var k = document.getElementById('kline');
  [1020, 1185, 1350].forEach(function (y) {
    el(k, 'line', { x1: 13, x2: 1790, y1: y, y2: y, stroke: '#e2e2e2', 'stroke-width': 1.5, 'stroke-dasharray': '2 2' });
  });
  candles.forEach(function (c, i) {
    var x = cx(i), col = c.up ? RED : GREEN;
    el(k, 'line', { x1: x, x2: x, y1: c.h, y2: c.t, stroke: col, 'stroke-width': 2.2 });
    el(k, 'line', { x1: x, x2: x, y1: c.b, y2: c.l, stroke: col, 'stroke-width': 2.2 });
    if (c.up) {
      el(k, 'rect', { x: x - 4, y: c.t, width: 8, height: Math.max(c.b - c.t, 1), fill: '#fff', stroke: col, 'stroke-width': 2.8 });
    } else {
      el(k, 'rect', { x: x - 5, y: c.t, width: 10, height: Math.max(c.b - c.t, 2), fill: col });
    }
  });
  line(k, ma20, '#c2187e', 4);
  line(k, ma10, '#f2b648', 3.6);
  line(k, ma5, '#262626', 3.6);

  // volume chart
  var volData = 'g945 g935 g940 r945 r945 g945 r945 g945 g946 g946 r945 g946 g946 g946 g946 g946 g946 r946 g946 r944 r944 g946 g946 r945 r945 g945 g945 r895 r883 g885 g930 r925 r915 r905 g925 g925 r935 r930 r850 r880 r890 g880 g865 g890 r915 r940 g910 r915 g925 r930 r925 r915 g753 g795 r868 r805 g897 g893 g893 g893 g915 g933 g910 r900 g930 g935 r915 r860 g878 g910 g915 g915 g920 r915 g935 r925 r885 r850 g840 g925 g925 g940 r850 r808 g890 g918 r895 r660 r575 r257 g518 r590 r635 r555 g730 r340 r402 g548 g722 r660 g750 g848 r835 g785 g847 r880 r752 r747 g822 g880 r905 r845 g900 r915 g898 g900 g905 g905 r900 r905 g917 g923 g920 g875 r798 g838 r890 g900 r890 r860 g903 g915 g922 r905 r840 g848 g775 r888 g855 r845 g855 g900 g908 r850 r855 r830 r785 r872'.split(' ');
  var v = document.getElementById('volume');
  var base = 1817;
  volData.forEach(function (t, i) {
    var top = 1500 + Number(t.slice(1)) / 3, x = cx(i), up = t[0] === 'r';
    if (up) {
      el(v, 'rect', { x: x - 4.2, y: top + 1, width: 8.4, height: Math.max(base - top - 1, 1), fill: '#fff', stroke: RED, 'stroke-width': 3.2 });
    } else {
      el(v, 'rect', { x: x - 5.5, y: top, width: 11, height: base - top, fill: GREEN });
    }
  });
  el(v, 'line', { x1: 13, x2: 1790, y1: 1818, y2: 1818, stroke: '#cfeccf', 'stroke-width': 2 });
  function spline(svg, pairs, color) {
    var pts = pairs.map(function (p) { return cx(p[0]) + ',' + (1500 + p[1] / 3).toFixed(1); }).join(' ');
    el(svg, 'polyline', { points: pts, fill: 'none', stroke: color, 'stroke-width': 3.8, 'stroke-linejoin': 'round' });
  }
  var volY = [[0,930],[2,940],[4,945],[14,945],[20,945],[25,943],[27,925],[28,915],[29,908],[31,905],[32,908],[33,915],[35,920],[38,915],[40,900],[42,875],[43,885],[45,905],[47,905],[50,915],[52,900],[53,875],[54,850],[55,825],[56,850],[57,875],[58,880],[60,905],[62,918],[64,915],[66,925],[68,900],[70,900],[72,905],[75,915],[76,912],[77,895],[78,880],[79,878],[81,890],[82,890],[84,882],[86,875],[87,850],[88,790],[89,690],[90,585],[91,525],[92,515],[93,510],[94,605],[95,565],[96,520],[97,545],[98,550],[99,535],[100,620],[101,700],[102,765],[103,785],[104,840],[105,825],[106,803],[107,805],[108,815],[109,825],[110,835],[111,850],[112,880],[113,890],[115,895],[117,902],[119,902],[120,905],[122,912],[123,905],[124,885],[125,870],[126,862],[127,858],[128,865],[129,880],[130,890],[132,900],[133,902],[134,895],[135,880],[136,855],[137,845],[139,838],[140,855],[142,865],[144,878],[145,860],[146,852],[147,845]];
  var volM = [[0,920],[2,922],[4,935],[6,940],[10,945],[14,945],[18,948],[22,942],[27,940],[28,930],[32,920],[36,912],[38,912],[40,905],[42,898],[46,893],[48,905],[50,910],[52,905],[53,890],[55,868],[58,862],[60,860],[62,870],[64,890],[66,910],[68,905],[72,905],[75,915],[77,900],[80,897],[82,893],[84,882],[87,875],[88,845],[89,790],[90,725],[91,680],[92,655],[93,635],[94,600],[95,545],[96,515],[97,535],[98,575],[99,600],[100,630],[101,670],[102,740],[103,765],[104,790],[105,810],[106,830],[107,832],[108,850],[109,855],[110,875],[111,890],[113,898],[115,908],[116,900],[117,885],[120,880],[122,880],[124,890],[127,880],[130,870],[133,870],[134,858],[136,860],[147,855]];
  var volG = [[0,928],[4,930],[10,933],[14,935],[18,942],[27,940],[30,930],[34,925],[38,920],[42,905],[48,903],[51,910],[53,895],[55,885],[58,880],[62,888],[66,890],[70,885],[72,885],[75,905],[77,905],[80,900],[82,898],[86,888],[87,880],[88,855],[89,810],[90,790],[92,760],[94,725],[95,700],[97,680],[99,660],[101,655],[104,652],[106,645],[107,650],[108,665],[109,695],[110,715],[112,740],[113,760],[114,770],[115,800],[116,825],[117,840],[118,855],[120,865],[123,878],[125,875],[126,885],[130,890],[132,893],[136,880],[138,872],[142,870],[144,872],[147,865]];
  spline(v, volY, '#f5c518');
  spline(v, volG, '#0f9410');
  spline(v, volM, '#cf2fd0');

  // time axis
  var t = document.getElementById('ticks');
  for (var x = 173, n = 0; x <= 1782; x += 12, n++) {
    var major = x === 293 || Math.abs(x - 1037) < 6 || x >= 1778;
    el(t, 'line', { x1: x, x2: x, y1: 1822, y2: major ? 1838 : 1830, stroke: major ? '#555' : '#888', 'stroke-width': major ? 2.5 : 1.6, opacity: Math.min(1, .15 + n * .08) });
  }

  // chip distribution: [y (zoom), right edge (zoom), colour]
  var c = document.getElementById('chipbars');
  function chipX(z) { return (z - 210) / 3; }
  [[65,214],[75,214],[85,215],[95,216],[105,218]].forEach(function (b) {
    el(c, 'rect', { x: 0, y: 1280 - 855 + b[0] / 2.376, width: chipX(b[1]) + 1, height: 2, fill: '#5cb948' });
  });
  el(c, 'rect', { x: 0, y: 1280 - 855 + 115 / 2.376, width: chipX(285), height: 3, fill: '#5cb948' });
  [[127,582],[138,960],[150,870],[160,770],[171,708],[182,856],[193,818],[204,686],[214,600],[225,958],[236,1356],[247,778],[258,342],[268,215],[280,212]].forEach(function (b) {
    el(c, 'rect', { x: 0, y: 1280 - 855 + b[0] / 2.376, width: chipX(b[1]), height: 3, fill: '#e34b4b' });
  });
})();
```
